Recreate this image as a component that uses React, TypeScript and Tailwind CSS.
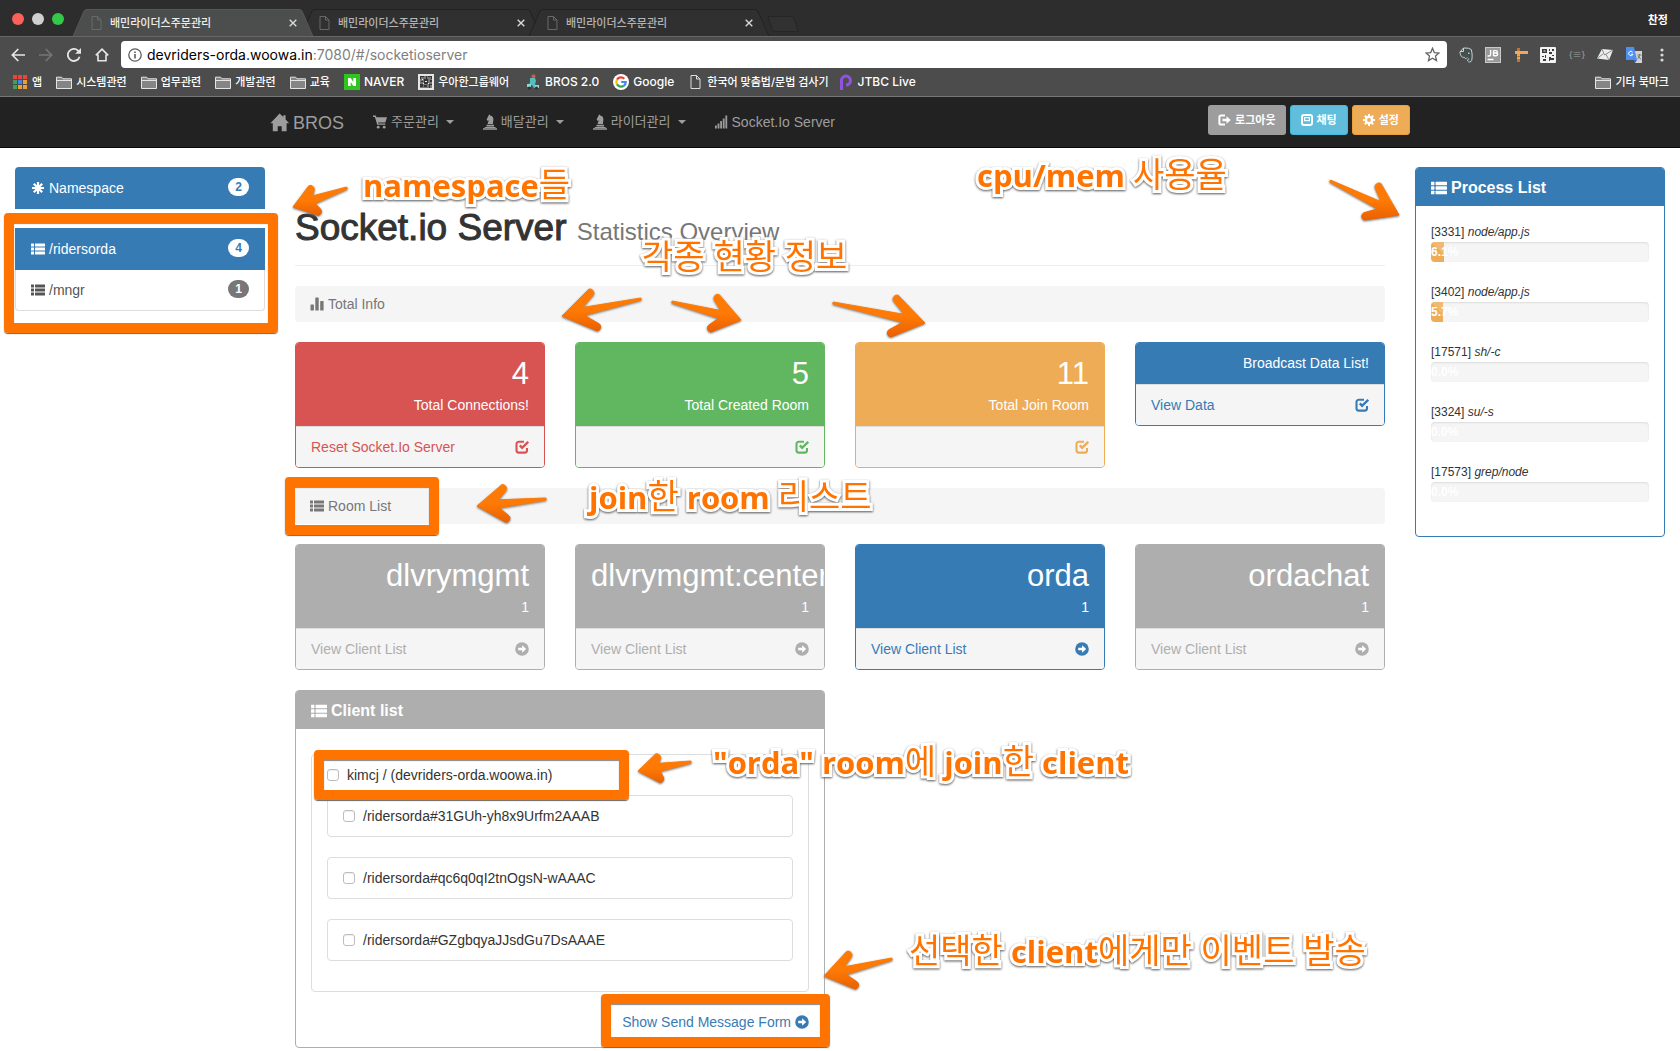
import React from "react";

const KR = "font-['Liberation_Sans','Noto_Sans_CJK_KR',sans-serif]";
const CHROME = "font-['Inter','Noto_Sans_CJK_KR',sans-serif]";

type IconProps = { className?: string };

const ThList = ({ className = "h-3.5 w-3.5" }: IconProps) => (
  <svg viewBox="0 0 14 14" className={className} fill="currentColor" aria-hidden="true">
    {[1.5, 5.5, 9.5].map((y) => (
      <g key={y}>
        <rect x="0" y={y} width="3" height="3" rx=".3" />
        <rect x="4" y={y} width="10" height="3" rx=".3" />
      </g>
    ))}
  </svg>
);

const Asterisk = () => (
  <svg viewBox="0 0 14 14" className="h-3.5 w-3.5" stroke="currentColor" strokeWidth="2.2" aria-hidden="true">
    <path d="M7 1v12M1 7h12M2.8 2.8l8.4 8.4M11.2 2.8l-8.4 8.4" />
  </svg>
);

const Stats = () => (
  <svg viewBox="0 0 14 14" className="h-3.5 w-3.5" fill="currentColor" aria-hidden="true">
    <rect x=".5" y="7.5" width="3.4" height="6" rx=".6" />
    <rect x="5.3" y=".5" width="3.4" height="13" rx=".6" />
    <rect x="10.2" y="4" width="3.4" height="9.5" rx=".6" />
  </svg>
);

const Check = () => (
  <svg viewBox="0 0 14 14" className="h-3.5 w-3.5" fill="none" stroke="currentColor" aria-hidden="true">
    <path d="M9 1.700H3.800A2.300 2.300 0 0 0 1.500 4v6.300a2.300 2.300 0 0 0 2.300 2.300h5.900a2.300 2.300 0 0 0 2.300-2.300V8" strokeWidth="2.100" />
    <path d="M4.800 5.400l2.300 2.500 6.100-6.100" strokeWidth="2.300" />
  </svg>
);

const CircleArrow = () => (
  <svg viewBox="0 0 14 14" className="h-3.5 w-3.5" aria-hidden="true">
    <circle cx="7" cy="7" r="6.8" fill="currentColor" />
    <path d="M3.2 5.8h3.9V3.2L11.2 7l-4.1 3.8V8.2H3.2z" fill="#fff" />
  </svg>
);

const Home = () => (
  <svg viewBox="0 0 20 19" className="h-[19px] w-5" fill="currentColor" aria-hidden="true">
    <path d="M9.6.6L.4 10.3h2.4v7.9h4.9v-5h4v5h4.9v-7.9h2.6L15.6 6.4V2.2h-2.3v1.9z" />
  </svg>
);

const Cart = () => (
  <svg viewBox="0 0 14 14" className="h-3.5 w-3.5" fill="currentColor" aria-hidden="true">
    <path d="M0 .6h2.9l.5 1.6H14l-1.700 5.200H5l.3 1.100h7v1.300H4.200L1.900 1.900H0z" />
    <circle cx="5.2" cy="12.2" r="1.4" />
    <circle cx="11.2" cy="12.2" r="1.4" />
  </svg>
);

const Knight = () => (
  <svg viewBox="0 0 14 16" className="h-4 w-3.5" fill="currentColor" aria-hidden="true">
    <path d="M6.200.3l1 1.300c2.100.4 3.200 1.900 3.200 3.900 0 1.900-.7 2.900-.3 4.500H4.700c0-1.700.6-2.600 1.900-3.700L4.800 6.900 3.600 5.500l1.500-3z" />
    <path d="M3.500 10.800h7.500v1.600H3.500zM2.200 13h10l.8 1H1.400zM0 14.300h14v1.500H0z" />
  </svg>
);

const Signal = () => (
  <svg viewBox="0 0 14 14" className="h-3.5 w-3.5" fill="currentColor" aria-hidden="true">
    <rect x="0" y="10.500" width="1.800" height="3" />
    <rect x="2.600" y="8.500" width="1.800" height="5" />
    <rect x="5.200" y="6" width="1.800" height="7.500" />
    <rect x="7.800" y="3.500" width="1.800" height="10" />
    <rect x="10.400" y=".5" width="1.800" height="13" />
  </svg>
);

const LogOut = () => (
  <svg viewBox="0 0 13 12" className="h-3 w-[13px]" aria-hidden="true">
    <path d="M7 1.500H3A1.600 1.600 0 0 0 1.400 3.100v5.800A1.600 1.600 0 0 0 3 10.500h4" fill="none" stroke="currentColor" strokeWidth="2" />
    <path d="M4.500 4.800h4V2.300L12.800 6 8.500 9.700V7.200h-4z" fill="currentColor" />
  </svg>
);

const Chat = () => (
  <svg viewBox="0 0 12 12" className="h-3 w-3" fill="none" stroke="currentColor" aria-hidden="true">
    <rect x="1" y="1" width="10" height="10" rx="2" strokeWidth="2" />
    <rect x="3.600" y="3.600" width="4.800" height="3" strokeWidth="1.200" />
  </svg>
);

const Cog = () => (
  <svg viewBox="0 0 12 12" className="h-3 w-3" fill="none" stroke="currentColor" aria-hidden="true">
    <circle cx="6" cy="6" r="3.100" strokeWidth="2.400" />
    <path d="M6 0v2.500M6 9.500V12M0 6h2.500M9.500 6H12M1.800 1.800l1.700 1.700M8.500 8.500l1.700 1.700M10.200 1.800L8.500 3.500M3.500 8.500l-1.700 1.700" strokeWidth="2" />
  </svg>
);

const PageIcon = ({ className = "" }: IconProps) => (
  <svg viewBox="0 0 11 14" className={`h-3.5 w-[11px] ${className}`} fill="none" stroke="currentColor" aria-hidden="true">
    <path d="M1 .5h5.500L10 4v9.500H1zM6.500.5V4H10" />
  </svg>
);

const Folder = () => (
  <svg viewBox="0 0 16 13" className="h-[13px] w-4" aria-hidden="true">
    <path d="M.5 12.500V1.200h5.200l1.300 1.600h8.500v9.700z" fill="#858585" stroke="#e4e4e4" />
    <path d="M.5 4.500h15" stroke="#e4e4e4" />
  </svg>
);

const TABS = [{ active: true }, { active: false }, { active: false }];

const Browser = () => (
  <header className={`${CHROME} text-white`}>
    <div className="flex h-9 items-end bg-[#2d2d2d]">
      <div className="flex w-[73px] shrink-0 items-center gap-2 self-center pt-0.5 pl-3">
        <span className="h-3 w-3 rounded-full bg-[#fc605b]" />
        <span className="h-3 w-3 rounded-full bg-[#d0d0d0]" />
        <span className="h-3 w-3 rounded-full bg-[#34c84a]" />
      </div>
      {TABS.map((tab, i) => (
        <div key={i} className={`relative -mr-3 h-[27px] w-60 ${tab.active ? "z-10 text-[#ededed]" : "text-[#b4b4b4]"}`}>
          <svg viewBox="0 0 240 27" preserveAspectRatio="none" className="absolute inset-0 h-full w-full" aria-hidden="true">
            <path d="M0 27.500L11 2Q12 .5 14 .5H226Q228 .5 229 2L240 27.500" fill={tab.active ? "#4c4e4d" : "#303030"} stroke={tab.active ? "#575757" : "#222"} />
          </svg>
          <div className="relative flex h-full items-center pr-3.5 pl-[18px]">
            <PageIcon className="text-[#686868]" />
            <span className="ml-2 flex-1 text-[11px] font-medium">배민라이더스주문관리</span>
            <button aria-label="탭 닫기" className="flex h-3 w-3 items-center justify-center text-[#d8d8d8]">
              <svg viewBox="0 0 8 8" className="h-2 w-2" stroke="currentColor" strokeWidth="1.400">
                <path d="M.7.7l6.600 6.600M7.300.7L.7 7.300" />
              </svg>
            </button>
          </div>
        </div>
      ))}
      <button aria-label="새 탭" className="mb-1 ml-2.5 h-4 w-8">
        <svg viewBox="0 0 32 16" className="h-4 w-8" fill="#313131" stroke="#262626">
          <path d="M1 .5h23q2 0 3 2L31.500 15.500H8q-2 0-3-2z" />
        </svg>
      </button>
      <button className="ml-auto self-center pt-1 pr-3 text-[11px] font-bold">찬정</button>
    </div>

    <div className="flex h-[35px] items-center border-t border-[#676767] bg-[#4c4c4c] pt-px">
      <nav aria-label="탐색" className="flex w-[121px] shrink-0 items-center justify-between pr-3 pl-[11px] text-[#e6e6e6]">
        <button aria-label="뒤로">
          <svg viewBox="0 0 14 14" className="h-3.5 w-3.5" fill="none" stroke="currentColor" strokeWidth="1.700"><path d="M14 7H1.500M7.300 1L1.300 7l6 6" /></svg>
        </button>
        <button aria-label="앞으로" className="text-[#757575]">
          <svg viewBox="0 0 14 14" className="h-3.5 w-3.5" fill="none" stroke="currentColor" strokeWidth="1.700"><path d="M0 7h12.500M6.700 1l6 6-6 6" /></svg>
        </button>
        <button aria-label="새로고침">
          <svg viewBox="0 0 14 14" className="h-3.5 w-3.5" fill="none" stroke="currentColor" strokeWidth="1.800"><path d="M12.600 8.700A6 6 0 1 1 11 2.600l1.300 1.300" /><path d="M14 0v5.800H8.200z" fill="currentColor" stroke="none" /></svg>
        </button>
        <button aria-label="홈">
          <svg viewBox="0 0 14 14" className="h-3.5 w-3.5" fill="none" stroke="currentColor" strokeWidth="1.600"><path d="M.8 7.400L7 1.200l6.200 6.200M3 6.500v6.300h8V6.500" /></svg>
        </button>
      </nav>
      <div className="relative flex h-[27px] flex-1 items-center rounded-sm bg-white px-[7px] text-sm text-black">
        <svg viewBox="0 0 14 14" className="mr-[5px] h-3.5 w-3.5" fill="none" stroke="#5c5c5c" aria-hidden="true">
          <circle cx="7" cy="7" r="6.200" strokeWidth="1.300" />
          <path d="M7 6v4.500M7 3.500V5" strokeWidth="1.600" />
        </svg>
        <a href="#address" className="flex-1 whitespace-nowrap">devriders-orda.woowa.in<span className="text-[#7f7f7f]">:7080/#/socketioserver</span></a>
        <button aria-label="북마크 추가">
          <svg viewBox="0 0 15 15" className="h-[15px] w-[15px]" fill="none" stroke="#666" strokeWidth="1.300">
            <path d="M7.500 1.300l1.800 4.300 4.700.4-3.500 3.100 1 4.500-4-2.400-4 2.400 1-4.500L1 6l4.700-.4z" />
          </svg>
        </button>
      </div>
      <div className="flex w-[233px] shrink-0 items-center justify-between pr-2.5 pl-3">
        <svg viewBox="0 0 14 16" className="h-4 w-3.5" aria-label="Evernote">
          <path d="M4.500 1l4.800.2 2.900 1.300c1 3.500 1.300 7 .5 11-.5 1.800-3.300 2-4 .500-.2-1.500.3-2 1.600-2.100M8.300 10.500c-1.500 2-2.700 1-2.900-.2-2.500.3-3.600-.500-4.500-5.300L4.500 1v3.500H1" fill="#3f5050" stroke="#ccd6d6" />
          <circle cx="9.800" cy="6.300" r=".8" fill="#dfe8e8" />
        </svg>
        <svg viewBox="0 0 16 16" className="h-4 w-4" aria-label="JetBrains">
          <rect width="16" height="16" fill="#c9c9c9" /><rect x="1" y="1" width="14" height="14" fill="#999" />
          <path d="M5.600 3v4.500q0 1.500-1.500 1.500H2.500M8.500 3.500V9M8.500 3.600h2.300q1.500 0 1.500 1.200T10.800 6H8.500h2.500q1.700 0 1.700 1.300T11 8.700H8.500M2.500 12.500h6" stroke="#fff" strokeWidth="1.400" fill="none" />
        </svg>
        <svg viewBox="0 0 14 16" className="h-4 w-3.5" aria-label="Page Ruler">
          <path d="M3 1h3v14H3z" fill="#c4732a" /><path d="M1 4h13v3H1z" fill="#f0a75e" /><path d="M3 7h3v2H3zM3 10h3v2H3z" fill="#eba25a" />
        </svg>
        <svg viewBox="0 0 16 16" className="h-4 w-4" aria-label="QR Code">
          <rect width="16" height="16" rx="1" fill="#f2f2f2" />
          <path d="M2 2h5v4H2zM9 2h1v2H9zM12 2h2v2h-2zM9 5h3v2H9zM2 9h2v1H2zM5 8h1v3H5zM3 12h3v2H3zM9 10h2v1h3v2h-4v1H9zM12 8h2v1h-2z" fill="#3c3c3c" /><path d="M3.500 3.500h2v1h-2z" fill="#f2f2f2" />
        </svg>
        <span className="w-4 text-center text-[9px] text-[#a0a0a0]">{"{≡}"}</span>
        <svg viewBox="0 0 16 14" className="h-3.5 w-4" aria-label="Mail">
          <path d="M5 1l11 1-4 10L0 10.500z" fill="#ededed" /><path d="M5 1l2.500 6L16 2M0 10.500l6-4.500M12 12L9 6.300" stroke="#8c8c8c" fill="none" />
        </svg>
        <svg viewBox="0 0 16 16" className="h-4 w-4" aria-label="Translate">
          <path d="M7 4h9v12H9z" fill="#d3d3d3" /><path d="M0 0h8l3 13H0z" fill="#4e8ff0" /><path d="M9 16l2-3H8z" fill="#3367c8" />
          <path d="M6.700 5.200A2.200 2.200 0 1 0 7 7.200H4.900" stroke="#fff" fill="none" />
          <path d="M11.500 8h4M13.500 7v1.500c0 2-2 3.500-2 3.500M12 9l3 3.500" stroke="#777" fill="none" />
        </svg>
        <button aria-label="메뉴"><svg viewBox="0 0 4 14" className="mx-1.5 h-3.5 w-1" fill="#d8d8d8"><circle cx="2" cy="2" r="1.600" /><circle cx="2" cy="7" r="1.600" /><circle cx="2" cy="12" r="1.600" /></svg></button>
      </div>
    </div>

    <nav aria-label="북마크" className="flex h-[26px] items-center gap-3.5 border-b border-[#777] bg-[#4c4c4c] pr-[11px] pb-[3px] pl-[13px] text-[11px] font-medium whitespace-nowrap">
      <a href="#apps" className="flex items-center gap-[5px]">
        <svg viewBox="0 0 14 14" className="h-3.5 w-3.5" aria-hidden="true">
          <path d="M0 0h4v4H0zM5 0h4v4H5zM10 0h4v4h-4z" fill="#e8453c" />
          <path d="M0 5h4v4H0z" fill="#3f9e5a" /><path d="M5 5h4v4H5z" fill="#3f83f8" /><path d="M10 5h4v4h-4z" fill="#eb9d37" />
          <path d="M0 10h4v4H0z" fill="#3f9e5a" /><path d="M5 10h4v4H5zM10 10h4v4h-4z" fill="#eb9d37" />
        </svg>앱
      </a>
      {["시스템관련", "업무관련", "개발관련", "교육"].map((t) => (
        <a key={t} href="#folder" className="flex items-center gap-1"><Folder />{t}</a>
      ))}
      <a href="#naver" className="flex items-center gap-1 text-xs">
        <svg viewBox="0 0 16 16" className="h-4 w-4" aria-hidden="true"><rect width="16" height="16" fill="#2fc51f" /><path d="M4 12V4h2.700l2.600 4V4H12v8H9.300L6.700 8v4z" fill="#fff" /></svg>NAVER
      </a>
      <a href="#groupware" className="flex items-center gap-1">
        <svg viewBox="0 0 16 16" className="h-4 w-4" aria-hidden="true">
          <rect width="16" height="16" fill="#e6e6e6" />
          <path d="M2 2h12v12H2z" fill="#777" />
          <path d="M2 2h4v1H3v2H2zM8 2h1v3H8zM10 2h4v3h-1V3h-3zM3 7h2v1H3zM6 5h4v5H6zM12 6h2v2h-2zM2 10h3v3H2zM6 11h3v2H6zM11 10h3v1h-2v3h-1z" fill="#333" />
          <path d="M7 7h2v1H7zM4 5h1v1H4zM10 9h1v1h-1zM5 9h1v1H5z" fill="#eee" />
        </svg>우아한그룹웨어
      </a>
      <a href="#bros" className="ml-1 flex items-center gap-1.5 text-xs">
        <svg viewBox="0 0 12 16" className="h-4 w-3" aria-hidden="true">
          <circle cx="6.500" cy="2.300" r="2" fill="#d65745" /><path d="M3 4h5l1 3-1 3 3 4H7L5 11H2l1-3z" fill="#4fc0bd" /><path d="M0 10h4v3H0zM8 11h4v3H8z" fill="#8fd6d4" />
          <circle cx="2.500" cy="14" r="1.600" fill="#333" /><circle cx="9.500" cy="14" r="1.600" fill="#333" />
        </svg>BROS 2.0
      </a>
      <a href="#google" className="flex items-center gap-1 text-xs">
        <svg viewBox="0 0 16 16" className="h-4 w-4" aria-hidden="true" fill="none" strokeWidth="2.200">
          <circle cx="8" cy="8" r="8" fill="#fff" />
          <path d="M11.300 4.700A4.700 4.700 0 0 0 4 5.600" stroke="#ea4335" /><path d="M4 5.600a4.700 4.700 0 0 0 0 4.800" stroke="#fbbc05" />
          <path d="M4 10.400a4.700 4.700 0 0 0 7 1.200" stroke="#34a853" /><path d="M8.200 8h4.500c0 1.500-.6 2.800-1.700 3.600" stroke="#4285f4" />
        </svg>Google
      </a>
      <a href="#spell" className="ml-0.5 flex items-center gap-1.5"><PageIcon className="text-[#dcdcdc]" />한국어 맞춤법/문법 검사기</a>
      <a href="#jtbc" className="-ml-1 flex items-center gap-[5px] text-xs">
        <svg viewBox="0 0 14 16" className="h-4 w-3.5" aria-hidden="true" fill="none"><path d="M2.500 16V7a4.500 4.500 0 1 1 4.500 4" stroke="#9152e0" strokeWidth="3" /></svg>JTBC Live
      </a>
      <a href="#other" className="ml-auto flex items-center gap-1"><Folder />기타 북마크</a>
    </nav>
  </header>
);

const Caret = () => <span className="ml-[3px] border-x-4 border-t-4 border-x-transparent border-t-current" />;

const NavBar = () => (
  <div className="border-b border-[#080808] bg-[#222] text-[#9d9d9d]">
    <div className="mx-auto flex h-[50px] max-w-[1170px] items-center gap-[29px] px-[15px]">
      <a href="#home" className="flex items-center gap-[3px] pt-px text-lg"><Home />BROS</a>
      <a href="#orders" className="flex items-center gap-1 text-[13px]"><Cart />주문관리<Caret /></a>
      <a href="#delivery" className="flex items-center gap-1 text-[13px]"><Knight />배달관리<Caret /></a>
      <a href="#riders" className="flex items-center gap-1 text-[13px]"><Knight />라이더관리<Caret /></a>
      <a href="#socket" className="flex items-center gap-[3px] text-sm"><Signal />Socket.Io Server</a>
      <div className="mt-2 ml-auto flex gap-1 self-start text-[11px] font-bold text-white">
        <button className="flex h-[30px] items-center gap-1 rounded-[3px] bg-[#9d9d9d] px-2.5"><LogOut />로그아웃</button>
        <button className="flex h-[30px] items-center gap-1 rounded-[3px] border border-[#46b8da] bg-[#60bedc] px-2.5"><Chat />채팅</button>
        <button className="flex h-[30px] items-center gap-1 rounded-[3px] border border-[#eb9f3c] bg-[#eeac57] px-2.5"><Cog />설정</button>
      </div>
    </div>
  </div>
);

const Badge = ({ children, className }: { children: React.ReactNode; className: string }) => (
  <span className={`mb-0.5 rounded-full px-[7px] text-xs leading-[18px] font-bold ${className}`}>{children}</span>
);

const Sidebar = () => (
  <aside className="col-span-2 px-[15px] pt-[19px]">
    <a href="#ns" className="flex h-[42px] items-center rounded-t bg-[#377bb5] px-4 text-white">
      <Asterisk /><span className="ml-1 flex-1">Namespace</span><Badge className="bg-white text-[#377bb5]">2</Badge>
    </a>
    <ul className="mt-[19px]">
      <li>
        <a href="#ridersorda" className="flex h-[42px] items-center bg-[#377bb5] px-4 text-white">
          <ThList /><span className="ml-1 flex-1">/ridersorda</span><Badge className="bg-white text-[#377bb5]">4</Badge>
        </a>
      </li>
      <li>
        <a href="#mngr" className="flex h-[41px] items-center rounded-b border border-t-0 border-[#ddd] px-[15px] text-[#555]">
          <ThList /><span className="ml-1 flex-1">/mngr</span><Badge className="bg-[#777] text-white">1</Badge>
        </a>
      </li>
    </ul>
  </aside>
);

const TONES = {
  red: { border: "border-[#d75452]", bg: "bg-[#d75452]", text: "text-[#d75452]" },
  green: { border: "border-[#60b760]", bg: "bg-[#60b760]", text: "text-[#60b760]" },
  orange: { border: "border-[#eeac57]", bg: "bg-[#eeac57]", text: "text-[#eeac57]" },
  blue: { border: "border-[#377bb5]", bg: "bg-[#377bb5]", text: "text-[#377bb5]" },
  gray: { border: "border-[#aeaeae]", bg: "bg-[#aeaeae]", text: "text-[#aeaeae]" },
};

type CardData = { tone: keyof typeof TONES; big?: string; label: string; foot: string; arrow?: boolean };

const StatCard = ({ tone, big, label, foot, arrow }: CardData) => (
  <section className={`min-w-0 self-start overflow-hidden rounded border ${TONES[tone].border}`}>
    <div className={`px-[15px] pt-2.5 pb-[11px] text-right whitespace-nowrap text-white ${TONES[tone].bg}`}>
      {big && <div className="text-[31px] leading-[42px]">{big}</div>}
      <div>{label}</div>
    </div>
    <a href="#detail" aria-label={foot || label} className={`flex items-center justify-between border-t border-[#ddd] bg-[#f5f5f5] px-[15px] py-2.5 ${TONES[tone].text}`}>
      <span className="h-5">{foot}</span>
      {arrow ? <CircleArrow /> : <Check />}
    </a>
  </section>
);

const TOTALS: CardData[] = [
  { tone: "red", big: "4", label: "Total Connections!", foot: "Reset Socket.Io Server" },
  { tone: "green", big: "5", label: "Total Created Room", foot: "" },
  { tone: "orange", big: "11", label: "Total Join Room", foot: "" },
  { tone: "blue", label: "Broadcast Data List!", foot: "View Data" },
];

const ROOMS: CardData[] = [
  { tone: "gray", big: "dlvrymgmt", label: "1", foot: "View Client List", arrow: true },
  { tone: "gray", big: "dlvrymgmt:center", label: "1", foot: "View Client List", arrow: true },
  { tone: "blue", big: "orda", label: "1", foot: "View Client List", arrow: true },
  { tone: "gray", big: "ordachat", label: "1", foot: "View Client List", arrow: true },
];

const SectionBar = ({ icon, children }: { icon: React.ReactNode; children: React.ReactNode }) => (
  <h2 className="my-5 flex h-9 items-center gap-1 rounded bg-[#f5f5f5] px-[15px] text-[#777]">{icon}{children}</h2>
);

const ClientCheck = ({ id, label }: { id: string; label: string }) => (
  <div className="flex items-center">
    <input id={id} type="checkbox" className="h-3 w-3 appearance-none rounded-[3px] border border-[#bdbdbd] bg-white shadow-[inset_0_1px_1px_#eee]" />
    <label htmlFor={id} className="pl-2">{label}</label>
  </div>
);

const SOCKETS = ["/ridersorda#31GUh-yh8x9Urfm2AAAB", "/ridersorda#qc6q0qI2tnOgsN-wAAAC", "/ridersorda#GZgbqyaJJsdGu7DsAAAE"];

const PanelTitle = ({ children, className }: { children: React.ReactNode; className: string }) => (
  <h3 className={`flex h-[38px] items-center gap-1 px-[15px] pt-0.5 text-base font-bold text-white ${className}`}>
    <ThList className="h-4 w-4" />{children}
  </h3>
);

const Main = () => (
  <main className="col-span-8 px-[15px] pt-[60px]">
    <h1 className="border-b border-[#eee] pb-[17px] text-[37px] leading-10 text-[#333] [-webkit-text-stroke:1px_#333]">
      Socket.io Server{" "}
      <small className="text-2xl leading-none text-[#777] [-webkit-text-stroke:0]">Statistics Overview</small>
    </h1>
    <SectionBar icon={<Stats />}>Total Info</SectionBar>
    <div className="grid grid-cols-4 gap-[30px]">{TOTALS.map((c) => <StatCard key={c.label} {...c} />)}</div>
    <SectionBar icon={<ThList />}>Room List</SectionBar>
    <div className="grid grid-cols-4 gap-[30px]">{ROOMS.map((c) => <StatCard key={c.big} {...c} />)}</div>
    <div className="mt-5 grid grid-cols-2 gap-[30px]">
      <section className="overflow-hidden rounded border border-[#aeaeae]">
        <PanelTitle className="bg-[#aeaeae]">Client list</PanelTitle>
        <div className="px-[15px] pt-[25px] pb-[15px]">
          <div className="rounded border border-[#ddd] px-[15px] pt-2.5 pb-[30px]">
            <ClientCheck id="client" label="kimcj / (devriders-orda.woowa.in)" />
            <ul className="mt-2.5 space-y-5">
              {SOCKETS.map((s) => (
                <li key={s} className="rounded border border-[#ddd] px-[15px] py-2.5"><ClientCheck id={s} label={s} /></li>
              ))}
            </ul>
          </div>
          <div className="mt-5 flex justify-end">
            <a href="#send" className="flex items-center gap-1 text-[#377bb5]">Show Send Message Form <CircleArrow /></a>
          </div>
        </div>
      </section>
    </div>
  </main>
);

const PROCESSES = [
  { pid: 3331, name: "node/app.js", use: 6.1 },
  { pid: 3402, name: "node/app.js", use: 5.7 },
  { pid: 17571, name: "sh/-c", use: 0 },
  { pid: 3324, name: "su/-s", use: 0 },
  { pid: 17573, name: "grep/node", use: 0 },
];

const ProcessPanel = () => (
  <aside className="col-span-2 px-[15px] pt-[19px]">
    <section className="overflow-hidden rounded border border-[#377bb5]">
      <PanelTitle className="bg-[#377bb5]">Process List</PanelTitle>
      <ul className="px-[15px] pt-4 pb-3.5 text-xs leading-5 text-[#333]">
        {PROCESSES.map((p) => (
          <li key={p.pid} className="mb-5">
            [{p.pid}] <em>{p.name}</em>
            <div className="h-5 overflow-hidden rounded bg-[#f5f5f5] shadow-[inset_0_1px_2px_rgba(0,0,0,0.1)]">
              <div
                className="h-5 bg-[#eeac57] bg-[linear-gradient(45deg,rgba(255,255,255,.15)_25%,transparent_25%,transparent_50%,rgba(255,255,255,.15)_50%,rgba(255,255,255,.15)_75%,transparent_75%)] bg-[length:40px_40px] font-bold whitespace-nowrap text-white"
                style={{ width: `${p.use}%` }}
              >
                {p.use.toFixed(1)}%
              </div>
            </div>
          </li>
        ))}
      </ul>
    </section>
  </aside>
);

type Pt = [number, number];
type ArrowData = { tail: Pt; tip: Pt; a: Pt; b: Pt };

const mix = (p: Pt, q: Pt, t: number): Pt => [p[0] + (q[0] - p[0]) * t, p[1] + (q[1] - p[1]) * t];
const CAP = 4;

/* A tapered arrow: thin tail, sharp tip and two barbs (ending at a and b) with round caps. */
const Arrow = ({ tail, tip, a, b }: ArrowData) => {
  const len = Math.hypot(tip[0] - tail[0], tip[1] - tail[1]);
  const nx = -(tip[1] - tail[1]) / len;
  const ny = (tip[0] - tail[0]) / len;
  const base = mix(tip, tail, 22 / len);

  const barb = (end: Pt) => {
    const l = Math.hypot(end[0] - tip[0], end[1] - tip[1]);
    const d: Pt = [(end[0] - tip[0]) / l, (end[1] - tip[1]) / l];
    const c: Pt = [end[0] - d[0] * CAP, end[1] - d[1] * CAP];
    let u: Pt = [-d[1] * CAP, d[0] * CAP];
    if (u[0] * (tail[0] - tip[0]) + u[1] * (tail[1] - tip[1]) > 0) u = [-u[0], -u[1]];
    const sweep = u[0] * d[1] - u[1] * d[0] > 0 ? 1 : 0;
    const side = (end[0] - tip[0]) * nx + (end[1] - tip[1]) * ny > 0 ? 1 : -1;
    return {
      outer: `${c[0] + u[0] * 0.8} ${c[1] + u[1] * 0.8}`,
      inner: `${c[0] - u[0]} ${c[1] - u[1]}`,
      sweep,
      joint: `${base[0] + nx * 4 * side} ${base[1] + ny * 4 * side}`,
      tail: `${tail[0] + nx * side} ${tail[1] + ny * side}`,
    };
  };
  const p = barb(a);
  const q = barb(b);
  return (
    <path
      fill="url(#arrowFill)"
      stroke="url(#arrowFill)"
      strokeLinejoin="round"
      d={`M${tip.join(" ")}L${p.outer}A${CAP} ${CAP} 0 0 ${p.sweep} ${p.inner}L${p.joint}L${p.tail}L${q.tail}L${q.joint}L${q.inner}A${CAP} ${CAP} 0 0 ${1 - q.sweep} ${q.outer}Z`}
    />
  );
};

const ARROWS: ArrowData[] = [
  { tip: [293, 207], tail: [347, 188], a: [314, 185], b: [323, 213] },
  { tip: [562, 316], tail: [641, 299], a: [594, 289], b: [602, 329] },
  { tip: [741, 320], tail: [672, 302], a: [714, 294], b: [706, 330] },
  { tip: [925, 323], tail: [833, 303], a: [893, 295], b: [886, 335] },
  { tip: [1399, 215], tail: [1330, 181], a: [1376, 182], b: [1360, 217] },
  { tip: [477, 506], tail: [546, 499], a: [507, 485], b: [511, 521] },
  { tip: [638, 771], tail: [691, 762], a: [661, 754], b: [665, 781] },
  { tip: [824, 976], tail: [892, 959], a: [852, 951], b: [860, 987] },
];

const Frame = ({ className }: { className: string }) => (
  <div className={`absolute rounded border-10 border-[#ff7400] shadow-[0_1px_1px_#666,inset_0_1px_1px_#888] ${className}`} />
);

const Note = ({ className, children }: { className: string; children: React.ReactNode }) => (
  <p className={`absolute font-['Open_Sans','Noto_Sans_CJK_KR',sans-serif] text-[31px] leading-10 font-bold whitespace-nowrap text-[#ff7400] drop-shadow-[0_1px_1px_#555] [paint-order:stroke_fill] [-webkit-text-stroke:6px_#fff] ${className}`}>
    {children}
  </p>
);

const Ko = ({ children }: { children: React.ReactNode }) => (
  <span className="font-['Open_Sans','Noto_Sans_CJK_KR',sans-serif] text-[34px] font-normal">{children}</span>
);

const Annotations = () => (
  <div className="pointer-events-none absolute inset-0">
    <Frame className="top-[213px] left-1 h-[120px] w-[274px]" />
    <Frame className="top-[477px] left-[285px] h-[58px] w-[154px]" />
    <Frame className="top-[750px] left-[314px] h-[50px] w-[315px]" />
    <Frame className="top-[994px] left-[601px] h-[53px] w-[229px]" />
    <svg className="absolute top-0 left-0 h-[1051px] w-[1680px] drop-shadow-[0_1px_1px_#777]" viewBox="0 0 1680 1051" aria-hidden="true">
      <defs>
        <linearGradient id="arrowFill" x1="0" y1="0" x2="0" y2="1">
          <stop offset="0.5" stopColor="#ff7a05" />
          <stop offset="1" stopColor="#ea6000" />
        </linearGradient>
      </defs>
      {ARROWS.map((p, i) => <Arrow key={i} {...p} />)}
    </svg>
    <Note className="top-[164px] left-[363px]">namespace<Ko>들</Ko></Note>
    <Note className="top-[154px] left-[977px]">cpu/mem <Ko>사용율</Ko></Note>
    <Note className="top-[236px] left-[642px]"><Ko>각종 현황 정보</Ko></Note>
    <Note className="top-[476px] left-[589px]">join<Ko>한</Ko> room <Ko>리스트</Ko></Note>
    <Note className="top-[741px] left-[713px]">"orda" room<Ko>에</Ko> join<Ko>한</Ko> client</Note>
    <Note className="top-[930px] left-[909px]"><Ko>선택한</Ko> client<Ko>에게만 이벤트 발송</Ko></Note>
  </div>
);

export default function App() {
  return (
    <div className={`relative min-h-screen overflow-x-hidden bg-white text-sm leading-5 text-[#333] ${KR}`}>
      <Browser />
      <NavBar />
      <div className="grid grid-cols-12">
        <Sidebar />
        <Main />
        <ProcessPanel />
      </div>
      <Annotations />
    </div>
  );
}
